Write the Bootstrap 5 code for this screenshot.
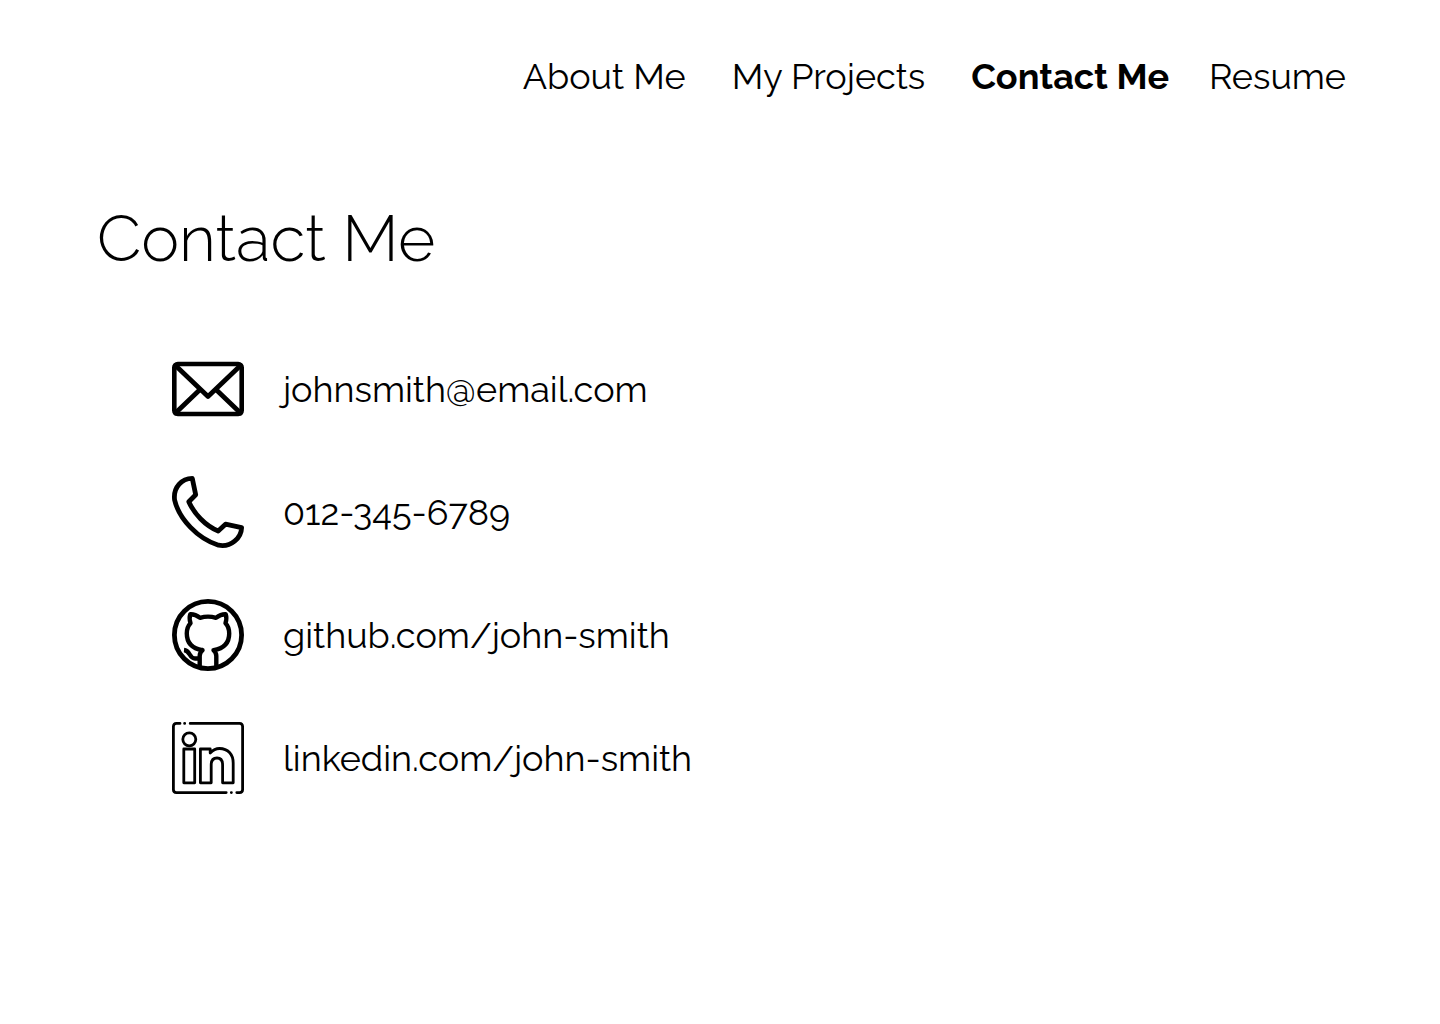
<!DOCTYPE html>
<html lang="en">
<head>
<meta charset="utf-8">
<meta name="viewport" content="width=device-width, initial-scale=1">
<title>Contact Me</title>
<link href="https://cdn.jsdelivr.net/npm/bootstrap@5.3.0/dist/css/bootstrap.min.css" rel="stylesheet">
<style>
  body { font-family: Raleway, Lato, "Open Sans", sans-serif; color: #000; background: #fff; }
  .site-nav { padding: 55px 94px 0 48px; font-size: 36px; line-height: 42px; }
  .site-nav .nav { column-gap: 46px; }
  .site-nav .nav-link { color: #000; }
  /* the bold label is wider than a regular one, so it gives part of its gap back */
  .site-nav .fw-bold { margin-right: -6px; }
  .contact-page { padding: 102px 97px 48px; }
  .page-title { font-size: 64px; line-height: 80px; font-weight: 300; margin-bottom: 74px; }
  .contact-list { gap: 51px; padding-left: 75px; }
  .contact-link { gap: 39px; font-size: 36px; line-height: 42px; color: #000; }
  .contact-link svg { width: 72px; height: 72px; fill: none; stroke: #000; stroke-width: 4.8; stroke-linecap: round; stroke-linejoin: round; }
  .contact-link .thin-icon { stroke-width: 2.8; }
</style>
<script src="https://cdn.jsdelivr.net/npm/bootstrap@5.3.0/dist/js/bootstrap.bundle.min.js"></script>
</head>
<body>
<header class="site-nav">
  <nav aria-label="Main">
    <ul class="nav justify-content-end">
      <li class="nav-item"><a class="nav-link p-0" href="#about">About Me</a></li>
      <li class="nav-item"><a class="nav-link p-0" href="#projects">My Projects</a></li>
      <li class="nav-item"><a class="nav-link p-0 fw-bold" href="#contact" aria-current="page">Contact Me</a></li>
      <li class="nav-item"><a class="nav-link p-0" href="#resume">Resume</a></li>
    </ul>
  </nav>
</header>
<main class="contact-page" id="contact">
  <h1 class="page-title">Contact Me</h1>
  <ul class="contact-list list-unstyled d-flex flex-column align-items-start mb-0">
    <li>
      <a class="contact-link d-flex align-items-center text-decoration-none" href="mailto:johnsmith@email.com">
        <svg class="flex-shrink-0" viewBox="0 0 72 72" aria-hidden="true">
          <rect x="2.3" y="11" width="67.4" height="50" rx="3.5" stroke-width="4.6"/>
          <path d="M3.5 12.5 36 43.5 68.5 12.5M3.5 60 27 37.5M68.5 60 45 37.5"/>
        </svg>
        <span>johnsmith@email.com</span>
      </a>
    </li>
    <li>
      <a class="contact-link d-flex align-items-center text-decoration-none" href="tel:0123456789">
        <svg class="flex-shrink-0" viewBox="0 0 72 72" aria-hidden="true">
          <path d="M20.3 2.4 23.7 18.7 16.8 25.7C22 37.5 33 49.5 46.2 55L53.5 48.2 69.6 51.6C69.3 62 59 71.5 46.5 69.2C26 63 7 43 2.6 24C1 11 10 2.5 20.3 2.4Z"/>
        </svg>
        <span>012-345-6789</span>
      </a>
    </li>
    <li>
      <a class="contact-link d-flex align-items-center text-decoration-none" href="https://github.com/john-smith">
        <svg class="flex-shrink-0" viewBox="0 0 72 72" aria-hidden="true">
          <circle cx="36" cy="36" r="33.6"/>
          <path stroke-width="4.4" d="M30.5 51.2C20 49.5 14.8 44 14.8 34.5C14.8 30 16.2 26.5 18.5 24.2C17.5 21 17.3 18 18.3 15.2C21.5 15 25 16.5 28 18.8C33 17.3 39 17.3 44 18.8C47 16.5 50.5 15 53.7 15.2C54.7 18 54.5 21 53.5 24.2C55.8 26.5 57.2 30 57.2 34.5C57.2 44 52 49.5 41.5 51.2C43.5 53 44.3 55 44.3 57V67.5M30.5 51.2C28.5 53 27.7 55 27.7 57V67.5"/>
          <path stroke-width="4.4" stroke-linecap="butt" d="M12 51C18.5 51.5 17 59.5 23 59.5H27.5"/>
        </svg>
        <span>github.com/john-smith</span>
      </a>
    </li>
    <li>
      <a class="contact-link d-flex align-items-center text-decoration-none" href="https://linkedin.com/john-smith">
        <svg class="thin-icon flex-shrink-0" viewBox="0 0 72 72" aria-hidden="true">
          <path d="M8 1.4H4.4Q1.4 1.4 1.4 4.4V67.6Q1.4 70.6 4.4 70.6H54.2M64.8 70.6H67.6Q70.6 70.6 70.6 67.6V4.4Q70.6 1.4 67.6 1.4H18.2M12.6 1.4H12.7M59.3 70.6H59.4"/>
          <circle cx="17.3" cy="17.3" r="6.5"/>
          <path d="M11.8 27H22.7V60.8H11.8ZM28.4 27H38.2V31C41 28 44 26.5 47.5 26.5C56 26.5 61.2 32.5 61.2 41V60.8H50.6V43C50.6 38.5 48.8 36 45 36C41.2 36 39.2 38.5 39.2 43V60.8H28.4Z"/>
        </svg>
        <span>linkedin.com/john-smith</span>
      </a>
    </li>
  </ul>
</main>
</body>
</html>
